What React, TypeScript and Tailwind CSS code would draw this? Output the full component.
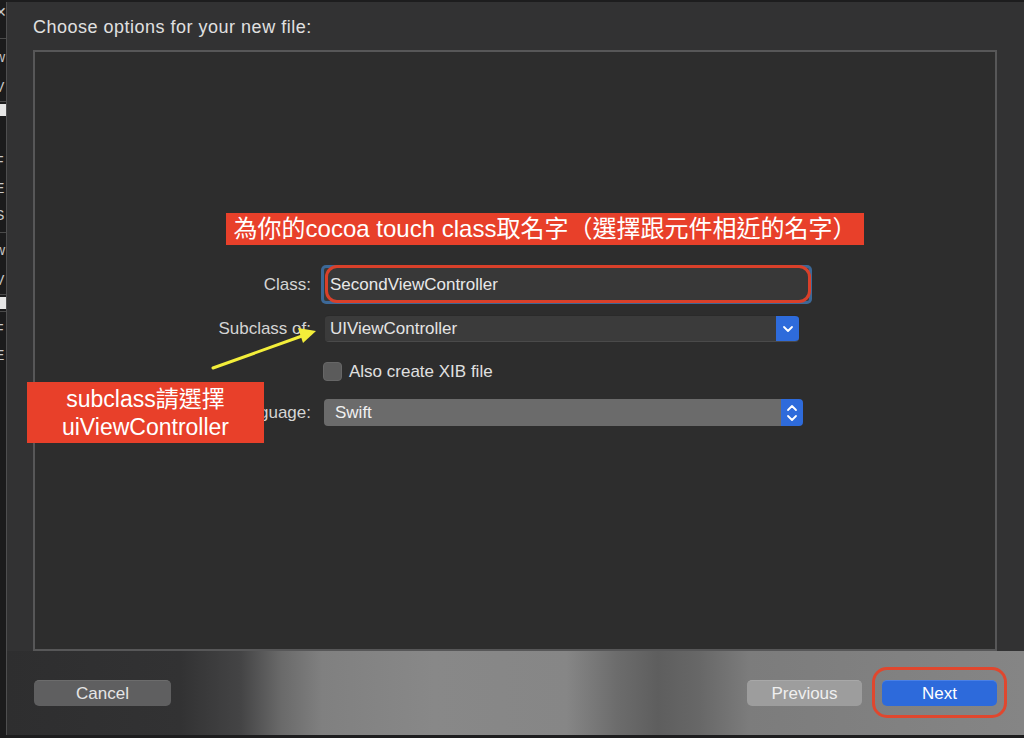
import React from "react";

const FONT = { fontFamily: '"Liberation Sans", "Noto Sans CJK TC", Arial, sans-serif' };

const stripRows: { h: number; t?: string; kind?: "text" | "block" | "sep" }[] = [
  { h: 4 },
  { h: 16, t: "✕", kind: "text" },
  { h: 18 },
  { h: 1, kind: "sep" },
  { h: 10 },
  { h: 16, t: "w", kind: "text" },
  { h: 14 },
  { h: 16, t: "V", kind: "text" },
  { h: 6 },
  { h: 1, kind: "sep" },
  { h: 2 },
  { h: 12, kind: "block" },
  { h: 37 },
  { h: 16, t: "F", kind: "text" },
  { h: 11 },
  { h: 16, t: "E", kind: "text" },
  { h: 11 },
  { h: 16, t: "S", kind: "text" },
  { h: 9 },
  { h: 1, kind: "sep" },
  { h: 9 },
  { h: 16, t: "w", kind: "text" },
  { h: 14 },
  { h: 16, t: "V", kind: "text" },
  { h: 6 },
  { h: 1, kind: "sep" },
  { h: 2 },
  { h: 12, kind: "block" },
  { h: 2 },
  { h: 1, kind: "sep" },
  { h: 9 },
  { h: 16, t: "F", kind: "text" },
  { h: 10 },
  { h: 16, t: "E", kind: "text" },
];

function LeftStrip() {
  return (
    <div className="w-[6px] shrink-0 bg-[#1b1b1c] overflow-hidden flex flex-col">
      {stripRows.map((r, i) => {
        if (r.kind === "text")
          return (
            <div
              key={i}
              className="flex items-center whitespace-nowrap -ml-[5px] text-[14px] leading-none text-[#c8c8c8]"
              style={{ height: r.h }}
            >
              {r.t}
            </div>
          );
        if (r.kind === "block")
          return <div key={i} className="bg-[#e6e6e6] w-full" style={{ height: r.h }} />;
        if (r.kind === "sep")
          return <div key={i} className="bg-[#4a4a4a] w-full" style={{ height: r.h }} />;
        return <div key={i} style={{ height: r.h }} />;
      })}
    </div>
  );
}

function ChevronDown() {
  return (
    <svg width="12" height="8" viewBox="0 0 12 8">
      <polyline points="2,2 6,6 10,2" fill="none" stroke="#ffffff" strokeWidth="1.8" strokeLinecap="round" strokeLinejoin="round" />
    </svg>
  );
}

function ChevronUpDown() {
  return (
    <svg width="12" height="20" viewBox="0 0 12 20">
      <polyline points="2,7 6,3 10,7" fill="none" stroke="#ffffff" strokeWidth="1.8" strokeLinecap="round" strokeLinejoin="round" />
      <polyline points="2,13 6,17 10,13" fill="none" stroke="#ffffff" strokeWidth="1.8" strokeLinecap="round" strokeLinejoin="round" />
    </svg>
  );
}

function Label({ children }: { children: React.ReactNode }) {
  return <div className="w-[276px] shrink-0 text-right text-[17px] text-[#d4d4d4] leading-none">{children}</div>;
}

export default function App() {
  return (
    <div className="relative w-[1024px] h-[738px] overflow-hidden bg-[#1b1b1c] flex" style={FONT}>
      <LeftStrip />
      <div className="flex-1 flex flex-col">
        <div className="h-[2px] bg-[#1d1d1e]" />
        <div className="flex-1 flex flex-col bg-[#323233] border-l border-[#4e4e4f]">
          {/* title */}
          <div className="h-[48px] pt-[3px] pl-[26px] flex items-center text-[18px] tracking-[0.5px] text-[#e0e0e0]">
            Choose options for your new file:
          </div>
          {/* inner box */}
          <div className="ml-[26px] mr-[27px] h-[601px] border-2 border-[#575758] bg-[#2d2d2d] pt-[213px] flex flex-col">
            {/* Class */}
            <div className="flex items-center h-[39px]">
              <Label>Class:</Label>
              <div className="ml-[10px] w-[491px] h-[39px] rounded-[5px] bg-[#3c6897] p-[3px]">
                <div className="w-full h-full bg-[#383838] rounded-[2px] flex items-center pl-[6px] text-[17px] text-[#e8e8e8]">
                  SecondViewController
                </div>
              </div>
            </div>
            {/* Subclass */}
            <div className="flex items-center h-[27px] mt-[11px]">
              <Label>Subclass of:</Label>
              <div className="ml-[14px] w-[474px] h-[27px] flex rounded-[4px] overflow-hidden border-t border-[#2a2a2a] border-b border-b-[#4a4a4a]">
                <div className="flex-1 bg-[#3b3b3b] flex items-center pl-[5px] text-[17px] text-[#e4e4e4]">UIViewController</div>
                <div className="w-[23px] bg-[#2e6bdb] flex items-center justify-center">
                  <ChevronDown />
                </div>
              </div>
            </div>
            {/* checkbox */}
            <div className="flex items-center h-[19px] mt-[20px]">
              <div className="w-[276px] shrink-0" />
              <div className="ml-[12px] w-[19px] h-[19px] rounded-[4px] bg-[#5b5b5b] border border-[#666]" />
              <div className="ml-[7px] text-[17px] text-[#e0e0e0] leading-none">Also create XIB file</div>
            </div>
            {/* Language */}
            <div className="flex items-center h-[27px] mt-[18px]">
              <Label>Language:</Label>
              <div className="ml-[13px] w-[479px] h-[27px] flex rounded-[4px] overflow-hidden">
                <div className="flex-1 bg-[#6b6b6b] flex items-center pl-[11px] text-[17px] text-[#f0f0f0]">Swift</div>
                <div className="w-[22px] bg-[#2e6bdb] flex items-center justify-center">
                  <ChevronUpDown />
                </div>
              </div>
            </div>
          </div>
          {/* footer */}
          <div className="flex-1 flex items-start pt-[29px] pl-[27px] pr-[27px] bg-[linear-gradient(90deg,#2e2e2f_0%,#323233_17%,#444445_23%,#6a6a6a_27%,#808080_31%,#888888_42%,#868686_55%,#6c6c6c_60%,#5e5e5e_64%,#676767_68%,#7c7c7c_73%,#858585_100%)]">
            <div className="w-[137px] h-[26px] rounded-[5px] bg-[#5f5f60] border-t border-[#6c6c6c] flex items-center justify-center text-[17px] text-[#e6e6e6]">
              Cancel
            </div>
            <div className="flex-1" />
            <div className="w-[115px] h-[26px] rounded-[5px] bg-[#9d9d9d] border-t border-[#a8a8a8] flex items-center justify-center text-[17px] text-[#efefef]">
              Previous
            </div>
            <div className="ml-[20px] w-[115px] h-[26px] rounded-[5px] bg-[#2d6adb] border-t border-[#4a80e6] flex items-center justify-center text-[17px] text-white">
              Next
            </div>
          </div>
        </div>
        <div className="h-[3px] bg-[#1d1d1e]" />
      </div>

      {/* annotations */}
      <div className="absolute left-[226px] top-[213px] w-[638px] h-[32px] bg-[#e8402a] flex items-center justify-center text-[24px] text-white whitespace-nowrap leading-none">
        為你的cocoa touch class取名字（選擇跟元件相近的名字）
      </div>
      <div className="absolute left-[325px] top-[265px] w-[486px] h-[38px] rounded-[12px] border-[3px] border-[#d9402a]" />
      <div className="absolute left-[27px] top-[382px] w-[237px] h-[61px] bg-[#e8402a] flex flex-col items-center justify-center text-[23px] leading-[28px] text-white">
        <div>subclass請選擇</div>
        <div>uiViewController</div>
      </div>
      <svg className="absolute left-0 top-0" width="1024" height="738" style={{ pointerEvents: "none" }}>
        <line x1="213" y1="368" x2="302" y2="336" stroke="#f3ee3a" strokeWidth="3" strokeLinecap="round" />
        <polygon points="316,331 298,328 303,343" fill="#f3ee3a" />
      </svg>
      <div className="absolute left-[872px] top-[667px] w-[135px] h-[51px] rounded-[15px] border-[3px] border-[#e0472e]" />
    </div>
  );
}
